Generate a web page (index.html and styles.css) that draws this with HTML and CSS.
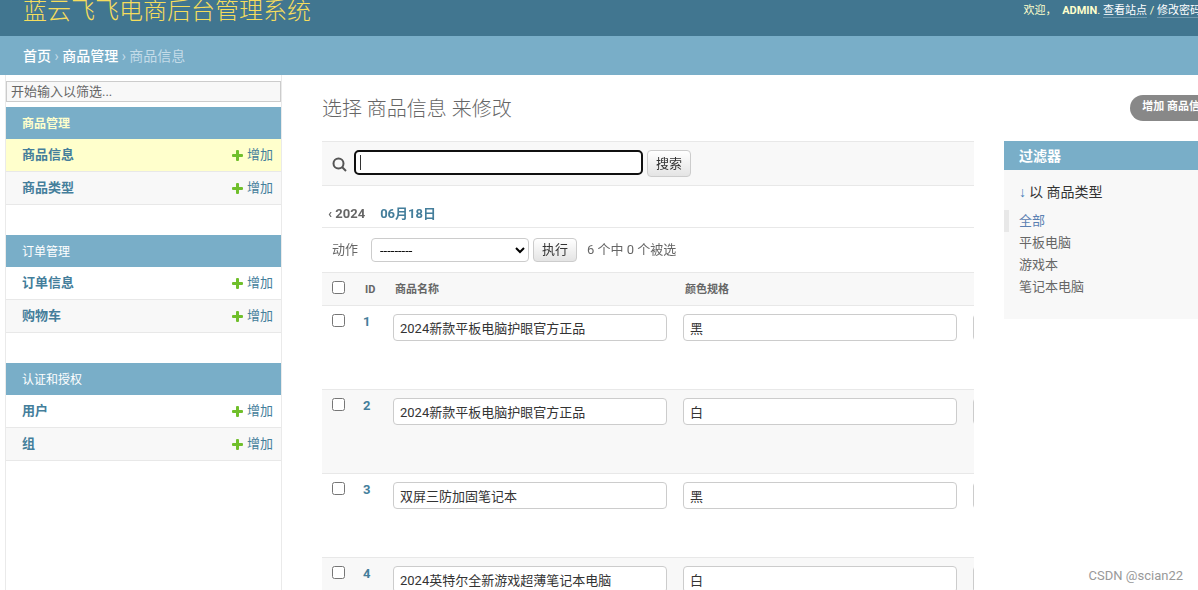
FILE: index.html
```html
<!DOCTYPE html>
<html lang="zh-CN">
<head>
<meta charset="utf-8">
<title>选择 商品信息 来修改</title>
<link rel="stylesheet" href="styles.css">
</head>
<body>
<div class="page">
  <header class="header">
    <div class="site-name"><a href="#">蓝云飞飞电商后台管理系统</a></div>
    <div class="user-tools">欢迎， <strong>ADMIN</strong>. <a href="#">查看站点</a> / <a href="#">修改密码</a> / <a href="#">注销</a></div>
  </header>
  <nav class="breadcrumbs"><a href="#">首页</a> › <a href="#">商品管理</a> › 商品信息</nav>
  <div class="main">
    <nav class="sidebar">
      <input class="nav-filter" type="search" placeholder="开始输入以筛选..." aria-label="筛选导航项目">
      <section class="module current-app">
        <h2 class="caption"><a href="#">商品管理</a></h2>
        <div class="model current"><a class="model-name" href="#">商品信息</a><a class="add" href="#"><svg class="plus" viewBox="0 0 11 11"><path d="M4 1Q4 0 5 0H6Q7 0 7 1V4H10Q11 4 11 5V6Q11 7 10 7H7V10Q7 11 6 11H5Q4 11 4 10V7H1Q0 7 0 6V5Q0 4 1 4H4Z"/></svg>增加</a></div>
        <div class="model"><a class="model-name" href="#">商品类型</a><a class="add" href="#"><svg class="plus" viewBox="0 0 11 11"><path d="M4 1Q4 0 5 0H6Q7 0 7 1V4H10Q11 4 11 5V6Q11 7 10 7H7V10Q7 11 6 11H5Q4 11 4 10V7H1Q0 7 0 6V5Q0 4 1 4H4Z"/></svg>增加</a></div>
      </section>
      <section class="module">
        <h2 class="caption"><a href="#">订单管理</a></h2>
        <div class="model"><a class="model-name" href="#">订单信息</a><a class="add" href="#"><svg class="plus" viewBox="0 0 11 11"><path d="M4 1Q4 0 5 0H6Q7 0 7 1V4H10Q11 4 11 5V6Q11 7 10 7H7V10Q7 11 6 11H5Q4 11 4 10V7H1Q0 7 0 6V5Q0 4 1 4H4Z"/></svg>增加</a></div>
        <div class="model"><a class="model-name" href="#">购物车</a><a class="add" href="#"><svg class="plus" viewBox="0 0 11 11"><path d="M4 1Q4 0 5 0H6Q7 0 7 1V4H10Q11 4 11 5V6Q11 7 10 7H7V10Q7 11 6 11H5Q4 11 4 10V7H1Q0 7 0 6V5Q0 4 1 4H4Z"/></svg>增加</a></div>
      </section>
      <section class="module">
        <h2 class="caption"><a href="#">认证和授权</a></h2>
        <div class="model"><a class="model-name" href="#">用户</a><a class="add" href="#"><svg class="plus" viewBox="0 0 11 11"><path d="M4 1Q4 0 5 0H6Q7 0 7 1V4H10Q11 4 11 5V6Q11 7 10 7H7V10Q7 11 6 11H5Q4 11 4 10V7H1Q0 7 0 6V5Q0 4 1 4H4Z"/></svg>增加</a></div>
        <div class="model"><a class="model-name" href="#">组</a><a class="add" href="#"><svg class="plus" viewBox="0 0 11 11"><path d="M4 1Q4 0 5 0H6Q7 0 7 1V4H10Q11 4 11 5V6Q11 7 10 7H7V10Q7 11 6 11H5Q4 11 4 10V7H1Q0 7 0 6V5Q0 4 1 4H4Z"/></svg>增加</a></div>
      </section>
    </nav>
    <main class="content">
      <div class="title-row">
        <h1>选择 商品信息 来修改</h1>
        <a class="add-link" href="#">增加 商品信息 <svg class="add-icon" viewBox="0 0 13 13"><path d="M5 1H8V5H12V8H8V12H5V8H1V5H5Z"/></svg></a>
      </div>
      <div class="columns">
        <div class="changelist">
          <form class="toolbar">
            <label for="searchbar" aria-label="搜索"><svg class="magnifier" viewBox="0 0 15 15"><circle cx="6.500" cy="6.500" r="5"/><path d="M10 10L14 14"/></svg></label>
            <input id="searchbar" class="search" type="text" autofocus>
            <button class="button search-button" type="button">搜索</button>
          </form>
          <div class="dates"><a class="back" href="#">‹ 2024</a><a href="#">06月18日</a></div>
          <div class="actions">
            <label for="action">动作</label>
            <select id="action"><option>---------</option></select>
            <button class="button" type="button">执行</button>
            <span class="counter">6 个中 0 个被选</span>
          </div>
          <div class="results">
            <table>
              <colgroup><col class="col-check"><col class="col-id"><col class="col-field"><col class="col-field"><col class="col-field"></colgroup>
              <thead><tr><th><input type="checkbox" aria-label="全选"></th><th>ID</th><th>商品名称</th><th>颜色规格</th><th></th></tr></thead>
              <tbody>
                <tr><td><input type="checkbox" aria-label="选择 1"></td><td class="id"><a href="#">1</a></td><td><input class="field" type="text" aria-label="商品名称" value="2024新款平板电脑护眼官方正品"></td><td><input class="field" type="text" aria-label="颜色规格" value="黑"></td><td><input class="field" type="text" aria-label="附加信息"></td></tr>
                <tr><td><input type="checkbox" aria-label="选择 2"></td><td class="id"><a href="#">2</a></td><td><input class="field" type="text" aria-label="商品名称" value="2024新款平板电脑护眼官方正品"></td><td><input class="field" type="text" aria-label="颜色规格" value="白"></td><td><input class="field" type="text" aria-label="附加信息"></td></tr>
                <tr><td><input type="checkbox" aria-label="选择 3"></td><td class="id"><a href="#">3</a></td><td><input class="field" type="text" aria-label="商品名称" value="双屏三防加固笔记本"></td><td><input class="field" type="text" aria-label="颜色规格" value="黑"></td><td><input class="field" type="text" aria-label="附加信息"></td></tr>
                <tr><td><input type="checkbox" aria-label="选择 4"></td><td class="id"><a href="#">4</a></td><td><input class="field" type="text" aria-label="商品名称" value="2024英特尔全新游戏超薄笔记本电脑"></td><td><input class="field" type="text" aria-label="颜色规格" value="白"></td><td><input class="field" type="text" aria-label="附加信息"></td></tr>
              </tbody>
            </table>
          </div>
        </div>
        <aside class="filter">
          <h2>过滤器</h2>
          <h3><span class="arrow">↓</span>以 商品类型</h3>
          <ul>
            <li class="selected"><a href="#">全部</a></li>
            <li><a href="#">平板电脑</a></li>
            <li><a href="#">游戏本</a></li>
            <li><a href="#">笔记本电脑</a></li>
          </ul>
        </aside>
      </div>
    </main>
  </div>
</div>
<div class="watermark">CSDN @scian22</div>
</body>
</html>
```
FILE: styles.css
```css
* { box-sizing: border-box; }
body {
  margin: 0;
  height: 100vh;
  overflow: hidden;
  background: #fff;
  color: #333;
  font: 13px/20px Roboto, "Noto Sans CJK SC", sans-serif;
}
input, select, button { font: inherit; color: #333; margin: 0; }
a { color: #447e9b; text-decoration: none; }
h1, h2, h3, ul { margin: 0; padding: 0; }
ul { list-style: none; }

.page {
  min-width: 1284px;
  height: 100%;
  display: flex;
  flex-direction: column;
  overflow: hidden;
}

.header {
  flex: none;
  display: flex;
  justify-content: space-between;
  align-items: flex-start;
  padding: 0 51px 14px 23px;
  background: #417690;
  color: #ffc;
  white-space: nowrap;
}
.site-name { font-size: 24px; font-weight: 300; line-height: 22px; }
.site-name a { color: #f5dd5d; }
.user-tools { font-size: 11px; line-height: 22px; }
.user-tools strong { margin-left: 3px; font-weight: 700; }
.user-tools a {
  color: #fff;
  border-bottom: 1px solid rgba(255, 255, 255, .25);
}

.breadcrumbs {
  flex: none;
  padding: 10px 23px 9px;
  background: #79aec8;
  color: #c4dce8;
  font-size: 14px;
}
.breadcrumbs a { color: #fff; font-weight: 500; }

.main { flex: 1; display: flex; min-height: 0; }

.sidebar {
  flex: none;
  width: 277px;
  margin-left: 5px;
  padding-top: 6px;
  border: solid #eaeaea;
  border-width: 0 1px;
}
.nav-filter {
  display: block;
  width: 100%;
  height: 21px;
  margin-bottom: 5px;
  padding: 0 4px;
  border: 1px solid #ccc;
  background: #f8f8f8;
  appearance: none;
}
.nav-filter::placeholder { color: #666; }
.module { margin-bottom: 30px; }
.caption {
  padding: 7px 16px 5px;
  background: #79aec8;
  font-size: 12px;
  font-weight: 400;
}
.caption a { color: #fff; }
.current-app .caption { font-weight: 700; }
.current-app .caption a { color: #ffc; }
.model {
  display: flex;
  justify-content: space-between;
  padding: 6px 8px 6px 16px;
  border-bottom: 1px solid #e8e8e8;
}
.model:nth-child(odd) { background: #f8f8f8; }
.model.current { background: #ffc; }
.model-name { font-weight: 700; }
.add { display: flex; align-items: center; gap: 4px; }
.plus { width: 11px; height: 11px; fill: #70bf2b; }

.content { flex: 1; min-width: 0; padding: 20px 40px; }
.title-row {
  display: flex;
  justify-content: space-between;
  align-items: flex-start;
  margin-bottom: 18px;
}
h1 { color: #666; font-size: 20px; font-weight: 300; line-height: 28px; }
.add-link {
  display: flex;
  align-items: center;
  gap: 8px;
  padding: 2px 12px 4px;
  border-radius: 13px;
  background: #888;
  color: #fff;
  font-size: 11px;
  font-weight: 700;
}
.add-icon { width: 13px; height: 13px; fill: #fff; }

.columns { display: flex; align-items: flex-start; gap: 30px; }
.changelist { flex: 1; min-width: 0; }
.toolbar {
  display: flex;
  align-items: flex-start;
  padding: 8px 10px;
  border: solid #e8e8e8;
  border-width: 1px 0;
  background: #f8f8f8;
}
.magnifier {
  display: block;
  width: 15px;
  height: 15px;
  margin: 7px 7px 0 0;
  fill: none;
  stroke: #555;
  stroke-width: 2;
}
.search {
  width: 289px;
  height: 25px;
  padding: 0 4px;
  border: 2px solid #101010;
  border-radius: 5px;
  background: #fff linear-gradient(#333, #333) 4px center / 1px 15px no-repeat;
  caret-color: transparent;
  outline: none;
}
.button {
  height: 24px;
  margin-left: 4px;
  padding: 1px 8px;
  border: 1px solid #ccc;
  border-radius: 4px;
  background: linear-gradient(#fff, #e4e4e4);
}
.search-button { height: 27px; }
.dates {
  display: flex;
  gap: 15px;
  padding: 18px 6px 3px;
  border-bottom: 1px solid #e8e8e8;
  font-weight: 700;
}
.dates .back { color: #666; }
.actions {
  display: flex;
  align-items: center;
  padding: 10px;
  color: #666;
}
.actions select {
  width: 158px;
  height: 24px;
  margin-left: 13px;
  padding: 0 4px;
  border: 1px solid #ccc;
  border-radius: 4px;
  background: #fff;
  color: #000;
}
.counter { margin-left: 10px; }

.results { overflow: hidden; }
table { width: 933px; table-layout: fixed; border-collapse: collapse; }
.col-check { width: 33px; }
.col-id { width: 30px; }
.col-field { width: 290px; }
th {
  height: 33px;
  padding: 1px 10px 0;
  border: solid #e8e8e8;
  border-width: 1px 0;
  background: #f8f8f8;
  color: #666;
  font-size: 11px;
  text-align: left;
}
td {
  height: 84px;
  padding: 8px;
  border-bottom: 1px solid #e8e8e8;
  vertical-align: top;
}
td:first-child { padding-left: 10px; }
th:first-child, td:first-child { padding-right: 0; }
tbody tr:nth-child(even) { background: #f8f8f8; }
input[type="checkbox"] { display: block; width: 13px; height: 13px; }
th input[type="checkbox"] { margin-bottom: 4px; }
.id { line-height: 16px; font-weight: 700; }
.field {
  display: block;
  width: 100%;
  height: 27px;
  padding: 0 6px;
  border: 1px solid #ccc;
  border-radius: 4px;
  background: #fff;
}

.filter { flex: none; width: 240px; padding-bottom: 21px; background: #f8f8f8; }
.filter h2 {
  padding: 5px 15px 4px;
  background: #79aec8;
  color: #fff;
  font-size: 14px;
  font-weight: 700;
}
.filter h3 {
  padding: 12px 15px 8px;
  font-size: 14px;
  font-weight: 400;
}
.arrow {
  display: inline-block;
  width: 10px;
  color: #447eb8;
  font: 14px/16px "Liberation Sans", sans-serif;
}
.filter li { padding-left: 10px; border-left: 5px solid #f8f8f8; line-height: 22px; }
.filter li a { color: #666; }
.filter .selected { border-color: #e8e8e8; }
.filter .selected a { color: #5b80b2; }

.watermark {
  position: absolute;
  right: 15px;
  bottom: 4px;
  color: #999;
  font: 13px/20px Roboto, sans-serif;
}
```
